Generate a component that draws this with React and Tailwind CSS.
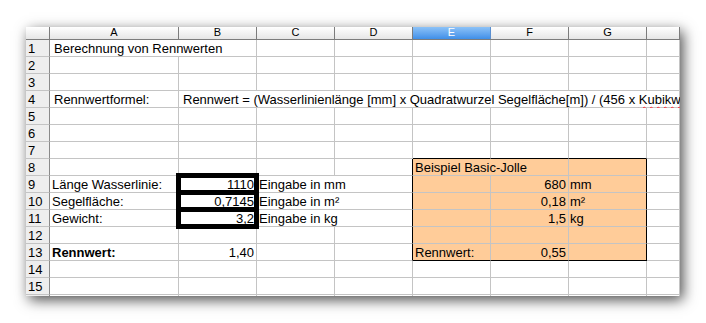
import React from "react";

const COLS = ["A", "B", "C", "D", "E", "F", "G", "H"];

const colW = {
  A: "w-[129px]",
  B: "w-[78px]",
  C: "w-[78px]",
  D: "w-[78px]",
  E: "w-[78px]",
  F: "w-[78px]",
  G: "w-[78px]",
  H: "w-[33px]",
};

const formula = (
  <>
    Rennwert = (Wasserlinienlänge [mm] x Quadratwurzel Segelfläche[m]) / (456 x{" "}
    <span className="underline decoration-wavy decoration-red-500 decoration-1 underline-offset-2">
      Kubikwurzel
    </span>{" "}
    Gewicht[kg]))
  </>
);

// cells per row; span = number of columns covered
const sheet = {
  1: { A: { text: "Berechnung von Rennwerten", span: 2, w: "w-[207px]", indent: true } },
  4: {
    A: { text: "Rennwertformel:", indent: true },
    B: { text: formula, span: 7, w: "w-[501px]", indent: true },
  },
  8: { E: { text: "Beispiel Basic-Jolle", span: 2, w: "w-[156px]" } },
  9: {
    A: { text: "Länge Wasserlinie:" },
    B: { text: "1110", right: true, box: true },
    C: { text: "Eingabe in mm", span: 2, w: "w-[156px]" },
    F: { text: "680", right: true },
    G: { text: "mm", tight: true },
  },
  10: {
    A: { text: "Segelfläche:" },
    B: { text: "0,7145", right: true, box: true },
    C: { text: "Eingabe in m²", span: 2, w: "w-[156px]" },
    F: { text: "0,18", right: true },
    G: { text: "m²", tight: true },
  },
  11: {
    A: { text: "Gewicht:" },
    B: { text: "3,2", right: true, box: true },
    C: { text: "Eingabe in kg", span: 2, w: "w-[156px]" },
    F: { text: "1,5", right: true },
    G: { text: "kg", tight: true },
  },
  13: {
    A: { text: "Rennwert:", bold: true },
    B: { text: "1,40", right: true },
    E: { text: "Rennwert:" },
    F: { text: "0,55", right: true },
  },
};

const orange = (row, col) => row >= 8 && row <= 13 && ["E", "F", "G"].includes(col);

function Row({ n }) {
  const data = sheet[n] || {};
  const cells = [];
  for (let i = 0; i < COLS.length; ) {
    const col = COLS[i];
    const c = data[col] || {};
    const span = c.span || 1;
    const last = COLS[i + span - 1];
    const blackRight = n >= 8 && n <= 13 && (last === "D" || last === "G");
    const blackBottom = (n === 7 || n === 13) && ["E", "F", "G"].includes(col);
    cells.push(
      <div
        key={col}
        className={`relative shrink-0 h-[17px] border-r border-b whitespace-nowrap overflow-visible leading-[17px] ${
          c.w || colW[col]
        } ${blackRight ? "border-r-black" : "border-r-[#c4c4c4]"} ${
          blackBottom ? "border-b-black" : "border-b-[#c4c4c4]"
        } ${orange(n, col) ? "bg-[#ffcc99]" : "bg-white"} ${
          c.right ? "text-right pr-[2px]" : c.indent ? "pl-[4px]" : c.tight ? "pl-[1px]" : "pl-[2px]"
        } ${c.bold ? "font-bold" : ""} ${span > 1 ? "overflow-hidden" : ""}`}
      >
        {c.text}
        {c.box && (
          <div className="absolute -top-[3px] -left-[3px] -right-[3px] -bottom-[3px] border-[5px] border-black z-10" />
        )}
      </div>
    );
    i += span;
  }
  return (
    <div className="flex">
      <div className="shrink-0 w-[24px] h-[17px] pl-[2px] leading-[17px] bg-[#eeeeee] border-r border-b border-r-[#8a8a8a] border-b-[#c4c4c4]">
        {n < 16 ? n : ""}
      </div>
      {cells}
    </div>
  );
}

export default function App() {
  const rows = Array.from({ length: 16 }, (_, i) => i + 1);
  return (
    <div className="w-[706px] h-[323px] bg-white pl-[26px] pt-[27px] overflow-hidden">
      <div
        className="w-[654px] h-[269px] overflow-hidden bg-white text-[13px] text-black shadow-[3px_4px_13px_rgba(0,0,0,0.7)]"
        style={{ fontFamily: '"Liberation Sans", Arial, sans-serif' }}
      >
        <div className="flex h-[13px] border-b border-[#7c7c7c] text-[11px] leading-[9px]">
          <div className="shrink-0 w-[24px] h-full bg-linear-to-b from-white to-[#e6e6e6] border-r border-[#7c7c7c]" />
          {COLS.map((col) => (
            <div
              key={col}
              className={`shrink-0 h-full text-center pt-[1px] border-r ${colW[col]} ${
                col === "E"
                  ? "bg-linear-to-b from-[#8cc2f7] to-[#3f8fe8] text-white border-[#5a8fd0]"
                  : "bg-linear-to-b from-white to-[#e6e6e6] border-[#7c7c7c]"
              }`}
            >
              {col === "H" ? "" : col}
            </div>
          ))}
        </div>
        {rows.map((n) => (
          <Row key={n} n={n} />
        ))}
      </div>
    </div>
  );
}
